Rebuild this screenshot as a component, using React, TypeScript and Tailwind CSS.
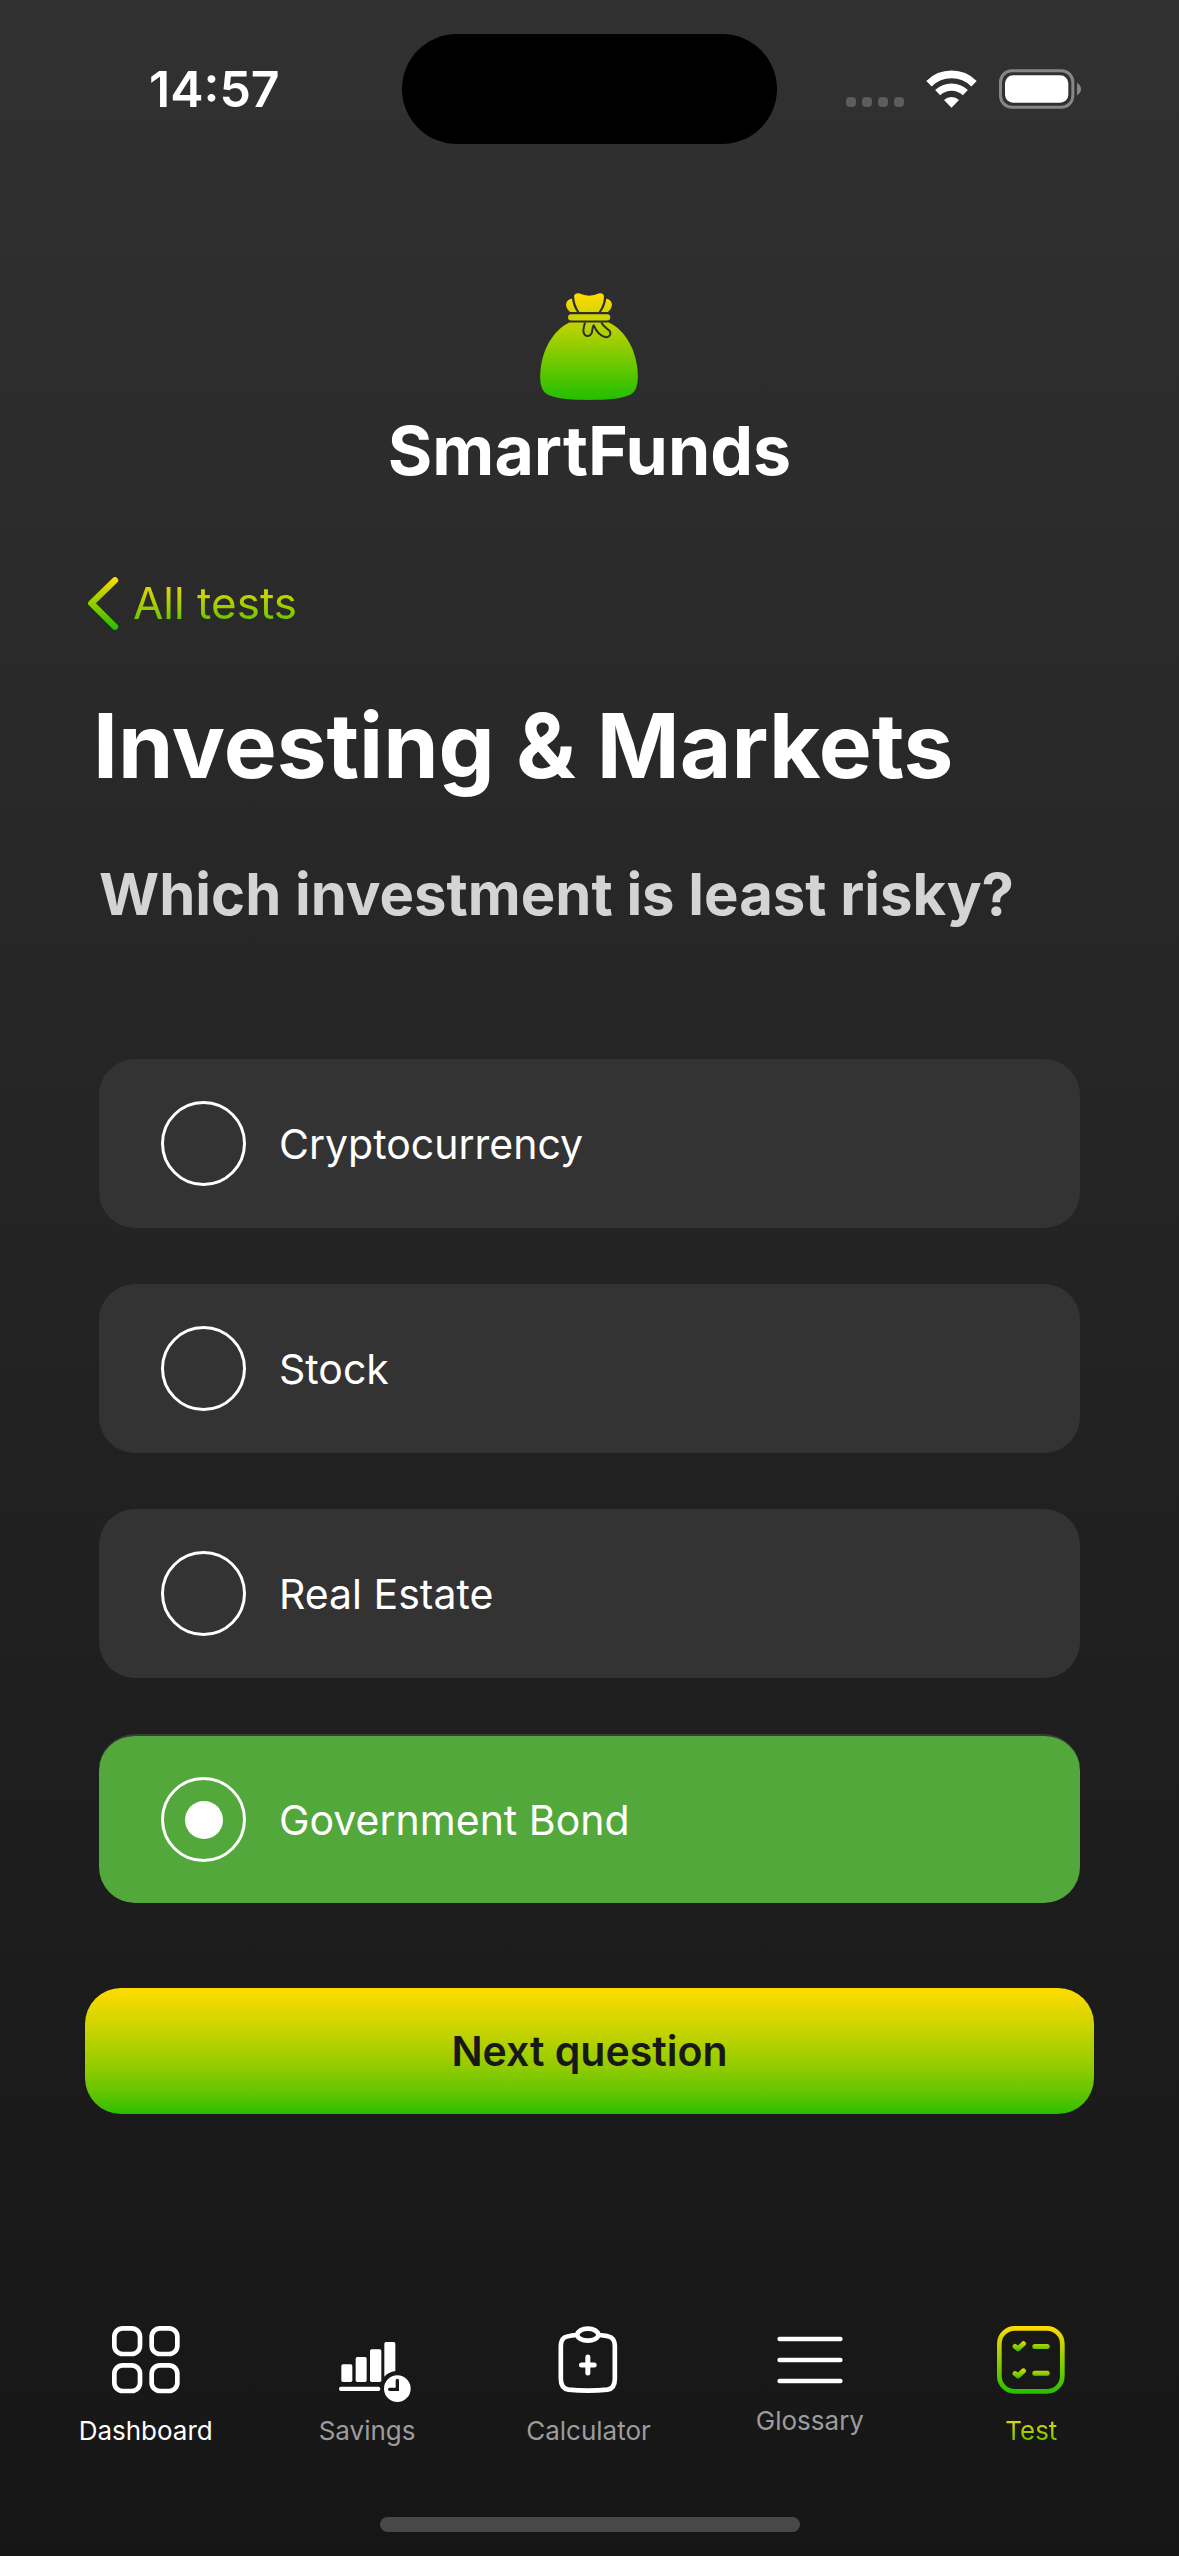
import { useState } from "react";
import type { ReactNode } from "react";

function Gradient({ id, y1, y2 }: { id: string; y1: number; y2: number }) {
  return (
    <defs>
      <linearGradient id={id} gradientUnits="userSpaceOnUse" x1="0" x2="0" y1={y1} y2={y2}>
        <stop offset="0" stopColor="#ffdb00" />
        <stop offset="1" stopColor="#23bf00" />
      </linearGradient>
    </defs>
  );
}

function StatusBar() {
  return (
    <header className="grid grid-cols-[1fr_375px_1fr] items-center pt-[34px]">
      <time className="pl-[149px] text-[50px] leading-[60px] font-semibold">14:57</time>
      <div className="h-[110px] rounded-full bg-black" />
      <div className="flex items-center justify-end pr-[98px]">
        <div className="mt-[26px] mr-[22px] flex gap-[6px]">
          {[0, 1, 2, 3].map((i) => (
            <span key={i} className="size-[10px] rounded-[4px] bg-[#5d5d5d]" />
          ))}
        </div>
        <svg className="mr-[22px] h-[38px] w-[51px]" viewBox="0 0 153 114" fill="none" aria-label="Wi-Fi">
          <path d="M9 41 A96 96 0 0 1 144 41" stroke="#fff" strokeWidth="23" />
          <path d="M35 68 A60 60 0 0 1 118 68" stroke="#fff" strokeWidth="22" />
          <path d="M76.500 113 L54 90 A32 32 0 0 1 99 90 Z" fill="#fff" />
        </svg>
        <svg className="h-[40px] w-[82px]" viewBox="0 0 246 120" fill="none" aria-label="Battery">
          <rect x="4.500" y="5.500" width="217" height="109" rx="34" stroke="#868686" strokeWidth="9" />
          <rect x="18" y="19" width="190" height="82" rx="24" fill="#fff" />
          <path d="M234 41 Q246 48 246 60 Q246 72 234 79 Z" fill="#868686" />
        </svg>
      </div>
    </header>
  );
}

function MoneyBag() {
  return (
    <svg className="h-[107px] w-[100px]" viewBox="507 68 300 322" fill="none" aria-hidden="true">
      <Gradient id="bag" y1={70} y2={388} />
      <g fill="url(#bag)">
        <path d="M600 85 Q588 88 585 101 Q584 114 597 125 H618 Q605 108 603 85 Z" />
        <path d="M708 85 Q720 88 723 101 Q724 114 711 125 H690 Q703 108 706 85 Z" />
        <path d="M609 76 Q613 67 624 69 Q655 84 685 69 Q696 67 699 76 Q700 102 683 125 H625 Q610 102 609 76 Z" />
        <rect x="591" y="132" width="127" height="19" rx="9" />
        <path d="M595 157 H714 C760 178 801 240 801 322 Q801 360 780 373 C755 387 715 390 654 390 C593 390 553 387 528 373 Q507 360 507 322 C507 240 549 178 595 157 Z" />
      </g>
      <path
        d="M642 157 C636 175 636 186 640 192 C645 200 658 199 662 189 C665 180 663 173 668 165 C676 184 690 199 705 201 C716 202 722 191 716 182 C710 175 699 172 691 157"
        stroke="#2c2c2c"
        strokeWidth="6"
        strokeLinejoin="round"
      />
    </svg>
  );
}

function Options() {
  const options = ["Cryptocurrency", "Stock", "Real Estate", "Government Bond"];
  const [selected, setSelected] = useState("Government Bond");
  return (
    <div role="radiogroup" aria-labelledby="question" className="mt-[129px] flex flex-col gap-[56px]">
      {options.map((option) => (
        <label
          key={option}
          className="flex min-h-[169px] items-center gap-[33px] rounded-[36px] bg-[#333333] pl-[62px] text-[41px] leading-[56px] has-checked:border-t-2 has-checked:border-[#3a3a3a] has-checked:bg-[#53a83b]"
        >
          <input
            type="radio"
            name="answer"
            checked={selected === option}
            onChange={() => setSelected(option)}
            className="grid size-[85px] shrink-0 appearance-none place-items-center rounded-full border-[3px] border-white before:size-[38px] before:rounded-full checked:before:bg-white"
          />
          {option}
        </label>
      ))}
    </div>
  );
}

function DashboardIcon() {
  return (
    <svg className="size-[68px]" viewBox="0 0 204 204" fill="none" stroke="#fff" strokeWidth="14" aria-hidden="true">
      <rect x="7" y="7" width="77" height="77" rx="25" />
      <rect x="119" y="7" width="77" height="77" rx="25" />
      <rect x="7" y="118" width="77" height="77" rx="25" />
      <rect x="119" y="118" width="77" height="77" rx="25" />
    </svg>
  );
}

function SavingsIcon() {
  return (
    <svg className="h-[60px] w-[88px]" viewBox="794 122 264 180" aria-hidden="true">
      <g fill="#fff">
        <rect x="849" y="189" width="33" height="53" rx="5" />
        <rect x="892" y="167" width="33" height="75" rx="5" />
        <rect x="935" y="144" width="34" height="98" rx="5" />
        <path d="M983 122 H1006 Q1011 122 1011 127 V209 Q990 212 978 226 V127 Q978 122 983 122 Z" />
        <rect x="842" y="256" width="124" height="13" rx="6" />
        <circle cx="1017" cy="262" r="40" />
      </g>
      <path d="M1017 237 V264 H994" fill="none" stroke="#181818" strokeWidth="10" strokeLinecap="round" />
    </svg>
  );
}

function CalculatorIcon() {
  return (
    <svg className="h-[68px] w-[60px]" viewBox="177 77 179 204" fill="none" stroke="#fff" strokeWidth="14" aria-hidden="true">
      <path d="M231 104 C198 107 186 110 185 136 V236 Q185 264 208 268 Q266 274 325 268 Q347 264 347 236 V136 C346 110 334 107 300 104" />
      <path d="M233 104 C237 93 246 85 266 85 C286 85 295 93 299 104 C293 117 284 121 266 121 C248 121 239 117 233 104 Z" />
      <path d="M266 170 V218 M247 194 H285" strokeLinecap="round" strokeWidth="15" />
    </svg>
  );
}

function GlossaryIcon() {
  return (
    <svg className="h-[48px] w-[66px]" viewBox="0 0 198 144" stroke="#fff" strokeWidth="14" strokeLinecap="round" aria-hidden="true">
      <path d="M8 9 H190 M8 72 H190 M8 135 H190" />
    </svg>
  );
}

function TestIcon() {
  return (
    <svg className="size-[68px]" viewBox="351 77 203 203" fill="none" strokeLinecap="round" strokeLinejoin="round" aria-hidden="true">
      <Gradient id="frame" y1={77} y2={280} />
      <Gradient id="row-one" y1={120} y2={154} />
      <Gradient id="row-two" y1={201} y2={235} />
      <rect x="358" y="84" width="188" height="188" rx="46" stroke="url(#frame)" strokeWidth="14" />
      <g stroke="url(#row-one)" strokeWidth="15">
        <path d="M405 138 L414 145 L430 130" />
        <path d="M464 138 L501 138.100" />
      </g>
      <g stroke="url(#row-two)" strokeWidth="15">
        <path d="M405 219 L414 226 L430 211" />
        <path d="M464 218 L501 218.100" />
      </g>
    </svg>
  );
}

function NavItem({ icon, label, className }: { icon: ReactNode; label: string; className: string }) {
  return (
    <a href="#" className={`flex flex-col items-center text-[26px] leading-[32px] ${className}`}>
      {icon}
      <span>{label}</span>
    </a>
  );
}

export default function App() {
  return (
    <div className="flex min-h-screen flex-col bg-linear-to-b from-[#313131] to-[#161616] font-['Inter',sans-serif] text-white">
      <StatusBar />
      <main className="px-[85px]">
        <div className="mt-[149px] flex flex-col items-center">
          <MoneyBag />
          <div className="mt-[10px] text-[68px] leading-[80px] font-bold">SmartFunds</div>
        </div>
        <a href="#" className="mt-[87px] ml-[3px] flex w-fit items-center gap-[14px]">
          <svg className="h-[53px] w-[31px]" viewBox="0 0 93 159" fill="none" aria-hidden="true">
            <Gradient id="chevron" y1={0} y2={159} />
            <path d="M81 10 L10 79 L81 149" stroke="url(#chevron)" strokeWidth="19" strokeLinecap="round" strokeLinejoin="round" />
          </svg>
          <span className="bg-linear-to-b from-[#ffdb00] to-[#23bf00] bg-clip-text text-[44px] leading-[53px] text-transparent">
            All tests
          </span>
        </a>
        <div className="px-[14px]">
          <h1 className="mt-[68px] -ml-[6px] text-[89px] leading-[96px] font-bold">Investing &amp; Markets</h1>
          <h2 id="question" className="mt-[64px] text-[58px] leading-[72px] font-bold whitespace-nowrap text-[#d4d4d4]">
            Which investment is least risky?
          </h2>
          <Options />
        </div>
        <button
          type="button"
          className="mt-[85px] h-[126px] w-full rounded-[36px] bg-linear-to-b from-[#ffdb00] to-[#23bf00] text-[41px] leading-[52px] font-semibold text-[#181818]"
        >
          Next question
        </button>
      </main>
      <nav className="mt-auto grid grid-cols-5 items-end pr-[37px] pl-[35px]">
        <NavItem icon={<DashboardIcon />} label="Dashboard" className="gap-[21px]" />
        <NavItem icon={<SavingsIcon />} label="Savings" className="gap-[13px] text-[#9c9c9c]" />
        <NavItem icon={<CalculatorIcon />} label="Calculator" className="gap-[21px] text-[#9c9c9c]" />
        <NavItem icon={<GlossaryIcon />} label="Glossary" className="gap-[21px] pb-[10px] text-[#9c9c9c]" />
        <NavItem
          icon={<TestIcon />}
          label="Test"
          className="gap-[21px] [&>span]:bg-linear-to-b [&>span]:from-[#ffdb00] [&>span]:to-[#23bf00] [&>span]:bg-clip-text [&>span]:text-transparent"
        />
      </nav>
      <div className="mx-auto mt-[70px] mb-[24px] h-[15px] w-[420px] rounded-full bg-[#484848]" />
    </div>
  );
}
